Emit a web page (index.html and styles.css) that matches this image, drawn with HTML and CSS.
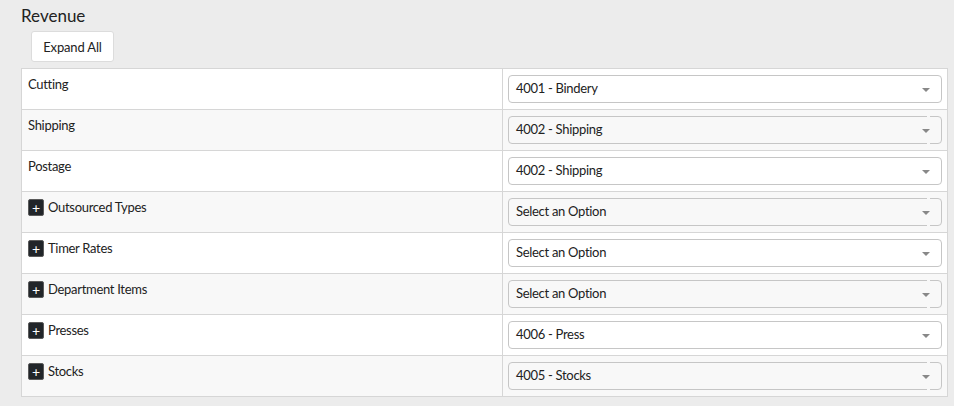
FILE: index.html
```html
<!DOCTYPE html>
<html>
<head>
<meta charset="utf-8">
<link rel="stylesheet" href="styles.css">
</head>
<body>
<div class="panel">
  <h2 class="title">Revenue</h2>
  <button class="btn">Expand All</button>
  <table class="grid">
    <tr class="row">
      <td class="label">Cutting</td>
      <td class="field"><div class="select">4001 - Bindery<span class="arrow"></span></div></td>
    </tr>
    <tr class="row alt">
      <td class="label">Shipping</td>
      <td class="field"><div class="select split">4002 - Shipping<span class="arrow"></span></div></td>
    </tr>
    <tr class="row">
      <td class="label">Postage</td>
      <td class="field"><div class="select">4002 - Shipping<span class="arrow"></span></div></td>
    </tr>
    <tr class="row alt">
      <td class="label"><span class="plus">+</span>Outsourced Types</td>
      <td class="field"><div class="select split">Select an Option<span class="arrow"></span></div></td>
    </tr>
    <tr class="row">
      <td class="label"><span class="plus">+</span>Timer Rates</td>
      <td class="field"><div class="select">Select an Option<span class="arrow"></span></div></td>
    </tr>
    <tr class="row alt">
      <td class="label"><span class="plus">+</span>Department Items</td>
      <td class="field"><div class="select split">Select an Option<span class="arrow"></span></div></td>
    </tr>
    <tr class="row">
      <td class="label"><span class="plus">+</span>Presses</td>
      <td class="field"><div class="select">4006 - Press<span class="arrow"></span></div></td>
    </tr>
    <tr class="row alt">
      <td class="label"><span class="plus">+</span>Stocks</td>
      <td class="field"><div class="select split">4005 - Stocks<span class="arrow"></span></div></td>
    </tr>
  </table>
</div>
</body>
</html>
```

FILE: styles.css
```css
html, body {
  margin: 0;
  padding: 0;
  background: #ececec;
  font-family: Lato, "Liberation Sans", sans-serif;
  color: #222;
}

.panel {
  margin: 0 6px 0 21px;
}

.title {
  margin: 0;
  padding-top: 5px;
  font-size: 17px;
  font-weight: 400;
  line-height: 22px;
  color: #222;
}

.btn {
  display: block;
  margin: 4px 0 0 10px;
  width: 83px;
  height: 31px;
  padding: 0;
  background: #fff;
  border: 1px solid #dcdcdc;
  border-radius: 3px;
  font-family: inherit;
  font-size: 13px;
  letter-spacing: -0.15px;
  color: #222;
}

.grid {
  margin-top: 6px;
  width: 927px;
  border-collapse: collapse;
  background: #fff;
  border: 1px solid #d6d6d6;
}

.row td {
  border-top: 1px solid #d6d6d6;
  height: 40px;
  box-sizing: border-box;
  padding: 0;
}

.row.alt td {
  background: #f8f8f8;
}

.label {
  width: 481px;
  vertical-align: top;
  padding: 7px 6px 0 6px !important;
  font-size: 13px;
  letter-spacing: -0.3px;
  line-height: 16px;
  border-right: 1px solid #d6d6d6;
}

.plus {
  display: inline-block;
  vertical-align: top;
  width: 14px;
  height: 15px;
  margin: 0 4px 0 0;
  background: #212529;
  border: 1px solid #5a5a5a;
  border-radius: 2px;
  color: #fff;
  font-size: 14px;
  line-height: 15px;
  letter-spacing: 0;
  text-align: center;
  font-weight: 400;
}

.field {
  padding: 6px 5px 6px 5px !important;
  vertical-align: top;
}

.select {
  position: relative;
  height: 28px;
  box-sizing: border-box;
  border: 1px solid #c6c6c6;
  border-radius: 4px;
  padding-left: 7px;
  font-size: 13px;
  letter-spacing: -0.3px;
  line-height: 25px;
  color: #222;
}

.arrow {
  position: absolute;
  right: 11px;
  top: 12px;
  width: 0;
  height: 0;
  border-left: 4px solid transparent;
  border-right: 4px solid transparent;
  border-top: 4px solid #888;
}

.select.split::before,
.select.split::after {
  content: "";
  position: absolute;
  right: 11px;
  width: 3px;
  height: 1px;
  background: #f8f8f8;
}

.select.split::before {
  top: -1px;
}

.select.split::after {
  bottom: -1px;
}
```
